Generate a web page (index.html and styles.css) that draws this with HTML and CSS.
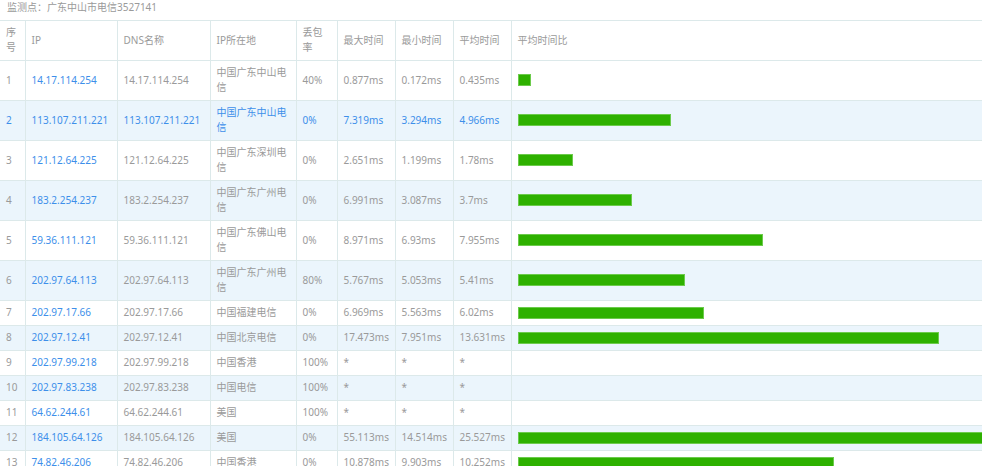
FILE: index.html
```html
<!DOCTYPE html>
<html lang="zh-CN">
<head>
<meta charset="utf-8">
<title>监测点</title>
<link rel="stylesheet" href="styles.css">
</head>
<body>
<div class="page">
  <div class="title">监测点：广东中山市电信3527141</div>
  <div class="wrap">
  <table class="grid">
    <colgroup>
      <col class="c-no"><col class="c-ip"><col class="c-dns"><col class="c-loc"><col class="c-loss"><col class="c-t"><col class="c-t"><col class="c-t"><col class="c-bar">
    </colgroup>
    <thead>
      <tr><th>序号</th><th>IP</th><th>DNS名称</th><th>IP所在地</th><th>丢包率</th><th>最大时间</th><th>最小时间</th><th>平均时间</th><th>平均时间比</th></tr>
    </thead>
    <tbody>
      <tr><td>1</td><td class="ip">14.17.114.254</td><td>14.17.114.254</td><td class="loc">中国广东中山电信</td><td>40%</td><td>0.877ms</td><td>0.172ms</td><td>0.435ms</td><td><div class="bar" style="width:13.4px"></div></td></tr>
      <tr class="alt hl"><td>2</td><td class="ip">113.107.211.221</td><td>113.107.211.221</td><td class="loc">中国广东中山电信</td><td>0%</td><td>7.319ms</td><td>3.294ms</td><td>4.966ms</td><td><div class="bar" style="width:153.4px"></div></td></tr>
      <tr><td>3</td><td class="ip">121.12.64.225</td><td>121.12.64.225</td><td class="loc">中国广东深圳电信</td><td>0%</td><td>2.651ms</td><td>1.199ms</td><td>1.78ms</td><td><div class="bar" style="width:55px"></div></td></tr>
      <tr class="alt"><td>4</td><td class="ip">183.2.254.237</td><td>183.2.254.237</td><td class="loc">中国广东广州电信</td><td>0%</td><td>6.991ms</td><td>3.087ms</td><td>3.7ms</td><td><div class="bar" style="width:114.3px"></div></td></tr>
      <tr><td>5</td><td class="ip">59.36.111.121</td><td>59.36.111.121</td><td class="loc">中国广东佛山电信</td><td>0%</td><td>8.971ms</td><td>6.93ms</td><td>7.955ms</td><td><div class="bar" style="width:245.8px"></div></td></tr>
      <tr class="alt"><td>6</td><td class="ip">202.97.64.113</td><td>202.97.64.113</td><td class="loc">中国广东广州电信</td><td>80%</td><td>5.767ms</td><td>5.053ms</td><td>5.41ms</td><td><div class="bar" style="width:167.2px"></div></td></tr>
      <tr><td>7</td><td class="ip">202.97.17.66</td><td>202.97.17.66</td><td class="loc">中国福建电信</td><td>0%</td><td>6.969ms</td><td>5.563ms</td><td>6.02ms</td><td><div class="bar" style="width:186px"></div></td></tr>
      <tr class="alt"><td>8</td><td class="ip">202.97.12.41</td><td>202.97.12.41</td><td class="loc">中国北京电信</td><td>0%</td><td>17.473ms</td><td>7.951ms</td><td>13.631ms</td><td><div class="bar" style="width:421.2px"></div></td></tr>
      <tr><td>9</td><td class="ip">202.97.99.218</td><td>202.97.99.218</td><td class="loc">中国香港</td><td>100%</td><td>*</td><td>*</td><td>*</td><td></td></tr>
      <tr class="alt"><td>10</td><td class="ip">202.97.83.238</td><td>202.97.83.238</td><td class="loc">中国电信</td><td>100%</td><td>*</td><td>*</td><td>*</td><td></td></tr>
      <tr><td>11</td><td class="ip">64.62.244.61</td><td>64.62.244.61</td><td class="loc">美国</td><td>100%</td><td>*</td><td>*</td><td>*</td><td></td></tr>
      <tr class="alt"><td>12</td><td class="ip">184.105.64.126</td><td>184.105.64.126</td><td class="loc">美国</td><td>0%</td><td>55.113ms</td><td>14.514ms</td><td>25.527ms</td><td><div class="bar" style="width:788.8px"></div></td></tr>
      <tr><td>13</td><td class="ip">74.82.46.206</td><td>74.82.46.206</td><td class="loc">中国香港</td><td>0%</td><td>10.878ms</td><td>9.903ms</td><td>10.252ms</td><td><div class="bar" style="width:316.8px"></div></td></tr>
    </tbody>
  </table>
  </div>
</div>
</body>
</html>
```

FILE: styles.css
```css
html, body {
  margin: 0;
  padding: 0;
  background: #fff;
}
.page {
  width: 984px;
  height: 466px;
  overflow: hidden;
  font-family: "Noto Sans", "Noto Sans CJK SC", sans-serif;
  font-size: 10px;
  color: #9a9a9a;
}
.title {
  height: 20px;
  line-height: 15px;
  padding-left: 7px;
  box-sizing: border-box;
}
.wrap {
  width: 982px;
  overflow: hidden;
}
.grid {
  width: 982px;
  table-layout: fixed;
  border-collapse: collapse;
}
.c-no { width: 25px; }
.c-ip { width: 92px; }
.c-dns { width: 93px; }
.c-loc { width: 86px; }
.c-loss { width: 41px; }
.c-t { width: 58px; }
.c-bar { width: 471px; }
.grid th, .grid td {
  border: 1px solid #dce9ea;
  padding: 4px 6px 5px;
  line-height: 15px;
  text-align: left;
  vertical-align: middle;
  font-weight: normal;
}
.grid td {
  white-space: nowrap;
  overflow: visible;
}
.grid td.loc {
  white-space: normal;
}
.grid th:first-child, .grid td:first-child {
  border-left: none;
}
.grid th:last-child, .grid td:last-child {
  border-right: none;
}
.grid tr.alt td {
  background: #ebf5fc;
}
.grid td.ip {
  color: #3d8fea;
}
.grid tr.hl td {
  color: #3d8fea;
}
.bar {
  height: 12px;
  box-sizing: border-box;
  background: #2eb100;
  border: 1px solid #6ccb4c;
}
```
